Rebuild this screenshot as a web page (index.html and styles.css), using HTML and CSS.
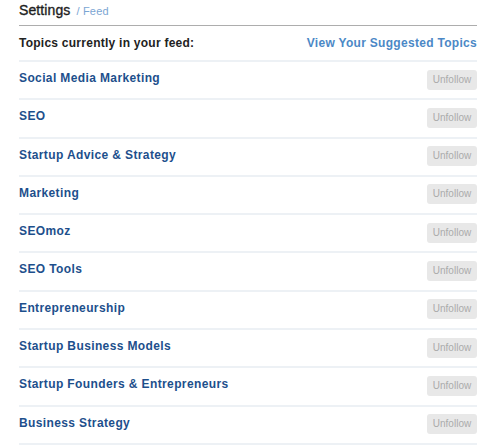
FILE: index.html
```html
<!DOCTYPE html>
<html>
<head>
<meta charset="utf-8">
<link rel="stylesheet" href="styles.css">
</head>
<body>
<div class="page">
  <div class="header">
    <span class="title">Settings</span>
    <span class="crumb">/ Feed</span>
  </div>
  <div class="topics-head">
    <span class="label">Topics currently in your feed:</span>
    <a class="suggest" href="#">View Your Suggested Topics</a>
  </div>
  <ul class="topics">
    <li class="row"><a class="name" href="#">Social Media Marketing</a><button class="unfollow">Unfollow</button></li>
    <li class="row"><a class="name" href="#">SEO</a><button class="unfollow">Unfollow</button></li>
    <li class="row"><a class="name" href="#">Startup Advice &amp; Strategy</a><button class="unfollow">Unfollow</button></li>
    <li class="row"><a class="name" href="#">Marketing</a><button class="unfollow">Unfollow</button></li>
    <li class="row"><a class="name" href="#">SEOmoz</a><button class="unfollow">Unfollow</button></li>
    <li class="row"><a class="name" href="#">SEO Tools</a><button class="unfollow">Unfollow</button></li>
    <li class="row"><a class="name" href="#">Entrepreneurship</a><button class="unfollow">Unfollow</button></li>
    <li class="row"><a class="name" href="#">Startup Business Models</a><button class="unfollow">Unfollow</button></li>
    <li class="row"><a class="name" href="#">Startup Founders &amp; Entrepreneurs</a><button class="unfollow">Unfollow</button></li>
    <li class="row"><a class="name" href="#">Business Strategy</a><button class="unfollow">Unfollow</button></li>
  </ul>
</div>
</body>
</html>
```

FILE: styles.css
```css
html, body {
  margin: 0;
  padding: 0;
  background: #ffffff;
  font-family: "Liberation Sans", Arial, sans-serif;
}

.page {
  margin-left: 19px;
  width: 458px;
}

.header {
  height: 25px;
  border-bottom: 1px solid #adadad;
  box-sizing: content-box;
  display: flex;
  align-items: baseline;
  line-height: 20px;
}

.title {
  font-size: 14px;
  color: #1e1e1e;
  font-weight: normal;
  -webkit-text-stroke: 0.35px #1e1e1e;
  letter-spacing: 0.1px;
}

.crumb {
  font-size: 11px;
  color: #7ba5d3;
  margin-left: 6px;
  letter-spacing: 0.2px;
}

.topics-head {
  height: 24px;
  padding-top: 10px;
  display: flex;
  justify-content: space-between;
  align-items: flex-start;
  line-height: 15px;
  border-bottom: 2px solid #edf1f5;
}

.label {
  font-size: 12px;
  font-weight: bold;
  color: #222222;
  letter-spacing: 0.25px;
}

.suggest {
  font-size: 12px;
  font-weight: bold;
  color: #4b88c6;
  text-decoration: none;
  letter-spacing: 0.3px;
}

.topics {
  list-style: none;
  margin: 0;
  padding: 0;
}

.row {
  height: 36.3px;
  display: flex;
  justify-content: space-between;
  align-items: flex-start;
  border-bottom: 2px solid #edf1f5;
}

.name {
  margin-top: 9px;
  font-size: 12px;
  line-height: 15px;
  font-weight: bold;
  color: #1d4f8c;
  text-decoration: none;
  letter-spacing: 0.38px;
}

.unfollow {
  margin-top: 7.5px;
  width: 50px;
  height: 20px;
  padding: 0;
  border: none;
  border-radius: 3px;
  background: #e8e8e8;
  color: #ababab;
  font-family: "Liberation Sans", Arial, sans-serif;
  font-size: 10px;
  line-height: 20px;
  text-align: center;
}
```
